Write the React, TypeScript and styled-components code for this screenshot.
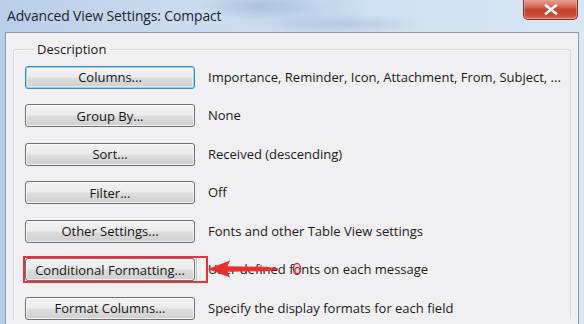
import styled, { createGlobalStyle } from "styled-components";

const GlobalStyle = createGlobalStyle`
  html, body {
    margin: 0;
    padding: 0;
    background: #c9dcef;
  }
  * {
    box-sizing: border-box;
  }
`;

const uiFont = `"Open Sans", "Noto Sans", "DejaVu Sans", sans-serif`;

type Setting = {
  label: string;
  value: string;
  focused?: boolean;
  marked?: boolean;
};

const settings: Setting[] = [
  {
    label: "Columns...",
    value: "Importance, Reminder, Icon, Attachment, From, Subject, ...",
    focused: true,
  },
  { label: "Group By...", value: "None" },
  { label: "Sort...", value: "Received (descending)" },
  { label: "Filter...", value: "Off" },
  { label: "Other Settings...", value: "Fonts and other Table View settings" },
  {
    label: "Conditional Formatting...",
    value: "User defined fonts on each message",
    marked: true,
  },
  { label: "Format Columns...", value: "Specify the display formats for each field" },
];

const App = () => (
  <>
    <GlobalStyle />
    <Window>
      <TitleBar>
        <Title>Advanced View Settings: Compact</Title>
        <CloseButton aria-label="Close">
          <svg width="14" height="11" viewBox="0 0 14 11">
            <path
              d="M2 1.5 L12 9.5 M12 1.5 L2 9.5"
              stroke="#fff"
              strokeWidth="2.6"
              strokeLinecap="round"
            />
          </svg>
        </CloseButton>
      </TitleBar>

      <Frame>
        <Body>
          <GroupBox>
            <Legend>Description</Legend>
            <Rows>
              {settings.map((s) => (
                <Row key={s.label}>
                  <ButtonCell>
                    <PushButton $focused={s.focused}>{s.label}</PushButton>
                    {s.marked && <Highlight />}
                  </ButtonCell>
                  <Value>
                    {s.value}
                    {s.marked && (
                      <>
                        <Arrow width="72" height="20" viewBox="0 0 72 20">
                          <path
                            d="M0 10 L22 1.5 L19.5 7.2 L58 7.8 L70 9.4 L70 10.8 L58 12.2 L19.5 12.8 L22 18.5 Z"
                            fill="#e8312f"
                          />
                        </Arrow>
                        <Marker width="10" height="14" viewBox="0 0 10 14">
                          <ellipse
                            cx="5"
                            cy="7"
                            rx="3.6"
                            ry="5.6"
                            fill="rgba(240,120,130,0.25)"
                            stroke="#d8263a"
                            strokeWidth="1.3"
                          />
                        </Marker>
                      </>
                    )}
                  </Value>
                </Row>
              ))}
            </Rows>
          </GroupBox>
        </Body>
      </Frame>
    </Window>
  </>
);

export default App;

const Window = styled.div`
  width: 584px;
  height: 324px;
  overflow: hidden;
  display: flex;
  flex-direction: column;
  font-family: ${uiFont};
  background:
    radial-gradient(ellipse 60px 14px at 258px 6px, rgba(120, 150, 190, 0.35), transparent),
    radial-gradient(ellipse 80px 10px at 345px 24px, rgba(130, 160, 200, 0.3), transparent),
    radial-gradient(ellipse 70px 30px at 300px 10px, rgba(160, 190, 225, 0.35), transparent),
    linear-gradient(90deg, #b8cfe8 0%, #c9dbef 30%, #cddff1 60%, #d8e7f5 100%);
`;

const TitleBar = styled.div`
  height: 32px;
  flex: none;
  display: flex;
  align-items: flex-start;
  padding: 0 6px 0 7px;
`;

const Title = styled.div`
  font-size: 13.9px;
  line-height: 31px;
  color: #1c2430;
  letter-spacing: -0.1px;
`;

const CloseButton = styled.button`
  margin-left: auto;
  width: 55px;
  height: 21px;
  margin-top: -1px;
  padding: 0;
  border: 1px solid #7a3026;
  border-top: none;
  border-radius: 0 0 5px 5px;
  background: linear-gradient(
    180deg,
    #e9a898 0%,
    #d96d5c 35%,
    #c2402c 55%,
    #c9503c 85%,
    #dc7a66 100%
  );
  box-shadow: inset 0 0 0 1px rgba(255, 200, 190, 0.45);
  display: flex;
  align-items: center;
  justify-content: center;
`;

const Frame = styled.div`
  flex: 1;
  padding: 0 5px;
  display: flex;
`;

const Body = styled.div`
  flex: 1;
  background: #f0eff1;
  border: 1px solid #8d99a6;
  border-bottom: none;
  padding: 7px 7px 0 7px;
`;

const GroupBox = styled.fieldset`
  margin: 0;
  padding: 7px 0 0 11px;
  border: 1px solid #d3dbe2;
  border-bottom: none;
  border-radius: 3px 3px 0 0;
  box-shadow: inset 1px 1px 0 #fbfbfc;
  min-width: 0;
`;

const Legend = styled.legend`
  margin-left: 9px;
  padding: 0 3px;
  font-size: 13px;
  line-height: 18px;
  color: #1a1a1a;
`;

const Rows = styled.div`
  display: flex;
  flex-direction: column;
  gap: 15.5px;
`;

const Row = styled.div`
  display: grid;
  grid-template-columns: 170px 1fr;
  column-gap: 13px;
  align-items: center;
  height: 23px;
`;

const ButtonCell = styled.div`
  position: relative;
  height: 23px;
`;

const PushButton = styled.button<{ $focused?: boolean }>`
  width: 170px;
  height: 23px;
  padding: 0;
  font-family: ${uiFont};
  font-size: 13px;
  color: #151515;
  border-radius: 3px;
  border: 1px solid ${(p) => (p.$focused ? "#3c8cc0" : "#707070")};
  background: linear-gradient(180deg, #f3f3f3 0%, #ebebeb 48%, #dddddd 52%, #cfcfcf 100%);
  box-shadow: ${(p) =>
    p.$focused
      ? "inset 0 0 0 1px #8fd2f0, inset 0 0 0 2px rgba(255,255,255,0.5)"
      : "inset 0 0 0 1px rgba(255,255,255,0.7)"};
`;

const Highlight = styled.div`
  position: absolute;
  left: -2px;
  top: -2px;
  width: 185px;
  height: 27px;
  border: 2px solid #e2343b;

  &::after {
    content: "";
    position: absolute;
    right: 9px;
    top: 0;
    bottom: 0;
    width: 1px;
    background: #c9c3c6;
  }
`;

const Value = styled.div`
  position: relative;
  font-size: 13px;
  color: #1a1a1a;
  white-space: nowrap;
`;

const Arrow = styled.svg`
  position: absolute;
  left: 0;
  top: 50%;
  margin-top: -10px;
`;

const Marker = styled.svg`
  position: absolute;
  left: 84px;
  top: 50%;
  margin-top: -7px;
`;
